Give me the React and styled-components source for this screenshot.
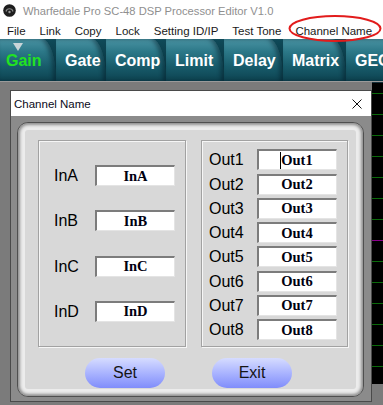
import React from "react";
import styled, { createGlobalStyle } from "styled-components";

const GlobalStyle = createGlobalStyle`
  html, body {
    margin: 0;
    padding: 0;
  }
  body {
    background: #7b7b7b;
    font-family: "Liberation Sans", Arial, sans-serif;
  }
`;

const Window = styled.div`
  position: relative;
  width: 383px;
  height: 405px;
  overflow: hidden;
  display: flex;
  flex-direction: column;
  background: #7b7b7b;
`;

const TitleBar = styled.div`
  height: 21px;
  display: flex;
  align-items: center;
  gap: 7px;
  padding-left: 3px;
  background: #fff;
  color: #8f8f8f;
  font-size: 11.2px;
  white-space: nowrap;
`;

const MenuBar = styled.div`
  height: 18px;
  box-sizing: border-box;
  display: flex;
  gap: 14px;
  padding: 3px 0 0 7px;
  background: #fff;
  color: #1a1a1a;
  font-size: 11.5px;
  line-height: 14px;
  white-space: nowrap;
`;

const Highlight = styled.svg`
  position: absolute;
  left: 288px;
  top: 14px;
`;

const TabBar = styled.div`
  height: 42px;
  display: flex;
  background: linear-gradient(#0f4a59, #062a34);
  border-bottom: 1px solid #9a9a9a;
  flex: none;
`;

const Tab = styled.div`
  position: relative;
  flex: none;
  width: ${(p) => p.$w}px;
  box-sizing: border-box;
  padding: 13px 0 0 ${(p) => p.$pad}px;
  background: linear-gradient(
    180deg,
    #4a93a3 0%,
    #2c7888 30%,
    #185c6b 65%,
    #0d4351 100%
  );
  border-top-right-radius: 14px 42px;
  box-shadow: inset -3px 0 4px rgba(0, 20, 30, 0.45);
  color: ${(p) => (p.$active ? "#22e222" : "#fff")};
  font-size: 16px;
  font-weight: bold;
  white-space: nowrap;
`;

const Marker = styled.div`
  position: absolute;
  left: 13px;
  top: 4px;
  width: 0;
  height: 0;
  border-left: 5px solid transparent;
  border-right: 5px solid transparent;
  border-top: 8px solid #c9d5d9;
`;

const Desk = styled.div`
  flex: 1;
  display: flex;
`;

const LeftPane = styled.div`
  width: 372px;
  flex: none;
  box-sizing: border-box;
  padding: 8px 0 0 10px;
`;

const Dialog = styled.div`
  width: 362px;
  height: 312px;
  box-sizing: border-box;
  display: flex;
  flex-direction: column;
  border: 1px solid #4a4a4a;
  background: #8b8b8b;
`;

const DialogTitle = styled.div`
  height: 25px;
  flex: none;
  display: flex;
  align-items: center;
  justify-content: space-between;
  padding: 0 9px 0 3px;
  background: #fff;
  color: #0a0a1a;
  font-size: 11.5px;
`;

const DialogBody = styled.div`
  flex: 1;
  padding: 6px 0 0 6px;
`;

const Panel = styled.div`
  width: 347px;
  height: 275px;
  box-sizing: border-box;
  padding: 17px 15px 0 20px;
  border: 1px solid #4f4f4f;
  border-radius: 11px;
  background: #d8d8d8;
  box-shadow: inset 0 0 3px 2px #8e8e8e, inset 0 0 0 7px #ececec;
`;

const GroupRow = styled.div`
  display: flex;
  gap: 15px;
`;

const Group = styled.div`
  width: ${(p) => p.$w}px;
  height: 207px;
  box-sizing: border-box;
  display: grid;
  grid-template-columns: ${(p) => p.$label}px 80px;
  row-gap: ${(p) => p.$gap}px;
  align-content: start;
  align-items: center;
  padding: ${(p) => p.$top}px 0 0 ${(p) => p.$left}px;
  border: 1px solid #a2a2a2;
  box-shadow: inset 1px 1px 0 #f6f6f6, 1px 1px 0 #f6f6f6;
`;

const Label = styled.span`
  font-size: 16px;
  color: #000;
  line-height: 21px;
`;

const NameBox = styled.div`
  width: 80px;
  height: 21px;
  box-sizing: border-box;
  display: flex;
  align-items: center;
  justify-content: center;
  background: #fff;
  border-top: 2px solid #7c7c7c;
  border-left: 2px solid #7c7c7c;
  border-right: 1px solid #e4e4e4;
  border-bottom: 1px solid #e4e4e4;
  font-family: "Liberation Serif", "Times New Roman", serif;
  font-weight: bold;
  font-size: 14.5px;
  color: #000010;
`;

const Caret = styled.span`
  display: inline-block;
  width: 1px;
  height: 17px;
  margin-right: 0;
  margin-left: -1px;
  background: #000;
`;

const ButtonRow = styled.div`
  display: flex;
  gap: 47px;
  padding-left: 47px;
  margin-top: 11px;
`;

const PillButton = styled.button`
  width: 80px;
  height: 30px;
  padding: 0;
  border: none;
  border-radius: 15px;
  background: linear-gradient(180deg, #d6dcff 0%, #aab4ff 50%, #808dfb 100%);
  color: #151515;
  font-family: "Liberation Sans", Arial, sans-serif;
  font-size: 16px;
`;

const GraphStrip = styled.div`
  flex: 1;
  display: flex;
  flex-direction: column;
`;

const Graph = styled.div`
  height: 301px;
  border-top: 1px solid #17303a;
  background:
    linear-gradient(
      to bottom,
      transparent 157px,
      #8a008a 157px,
      #8a008a 158px,
      transparent 158px
    ),
    repeating-linear-gradient(
      to bottom,
      transparent 0,
      transparent 10px,
      #0b6a0b 10px,
      #0b6a0b 11px,
      transparent 11px,
      transparent 21px
    ),
    #000;
`;

const inputs = ["InA", "InB", "InC", "InD"];
const outputs = ["Out1", "Out2", "Out3", "Out4", "Out5", "Out6", "Out7", "Out8"];
const menu = ["File", "Link", "Copy", "Lock", "Setting ID/IP", "Test Tone", "Channel Name"];
const tabs = [
  { name: "Gain", w: 56, pad: 6, active: true },
  { name: "Gate", w: 50, pad: 9 },
  { name: "Comp", w: 60, pad: 9 },
  { name: "Limit", w: 58, pad: 9 },
  { name: "Delay", w: 59, pad: 9 },
  { name: "Matrix", w: 63, pad: 9 },
  { name: "GEQ", w: 70, pad: 9 },
];

const AppIcon = () => (
  <svg width="13" height="13" viewBox="0 0 13 13">
    <circle cx="6.5" cy="6.5" r="6.3" fill="#1e1e1e" />
    <path d="M3 7.5 A3.6 3.6 0 0 1 10 7.5" stroke="#8a8a8a" strokeWidth="1.2" fill="none" />
    <circle cx="6.5" cy="8" r="1.2" fill="#9a9a9a" />
  </svg>
);

const CloseIcon = () => (
  <svg width="10" height="10" viewBox="0 0 10 10">
    <path d="M0.5 0.5 L9.5 9.5 M9.5 0.5 L0.5 9.5" stroke="#111" strokeWidth="1" />
  </svg>
);

export default function App() {
  return (
    <Window>
      <GlobalStyle />
      <TitleBar>
        <AppIcon />
        Wharfedale Pro SC-48 DSP Processor Editor V1.0
      </TitleBar>
      <MenuBar>
        {menu.map((m) => (
          <span key={m}>{m}</span>
        ))}
      </MenuBar>
      <TabBar>
        {tabs.map((t) => (
          <Tab key={t.name} $w={t.w} $pad={t.pad} $active={t.active}>
            {t.active && <Marker />}
            {t.name}
          </Tab>
        ))}
      </TabBar>
      <Desk>
        <LeftPane>
          <Dialog>
            <DialogTitle>
              Channel Name
              <CloseIcon />
            </DialogTitle>
            <DialogBody>
              <Panel>
                <GroupRow>
                  <Group $w={148} $label={41} $gap={24.33} $top={24} $left={15}>
                    {inputs.map((n) => (
                      <React.Fragment key={n}>
                        <Label>{n}</Label>
                        <NameBox>{n}</NameBox>
                      </React.Fragment>
                    ))}
                  </Group>
                  <Group $w={147} $label={47.5} $gap={3.28} $top={8.3} $left={7}>
                    {outputs.map((n, i) => (
                      <React.Fragment key={n}>
                        <Label>{n}</Label>
                        <NameBox>
                          {i === 0 && <Caret />}
                          {n}
                        </NameBox>
                      </React.Fragment>
                    ))}
                  </Group>
                </GroupRow>
                <ButtonRow>
                  <PillButton>Set</PillButton>
                  <PillButton>Exit</PillButton>
                </ButtonRow>
              </Panel>
            </DialogBody>
          </Dialog>
        </LeftPane>
        <GraphStrip>
          <Graph />
        </GraphStrip>
      </Desk>
      <Highlight width="95" height="29" viewBox="0 0 95 29">
        <ellipse cx="47" cy="14.5" rx="45.5" ry="12.5" fill="none" stroke="#e21c1c" strokeWidth="2" />
      </Highlight>
    </Window>
  );
}
